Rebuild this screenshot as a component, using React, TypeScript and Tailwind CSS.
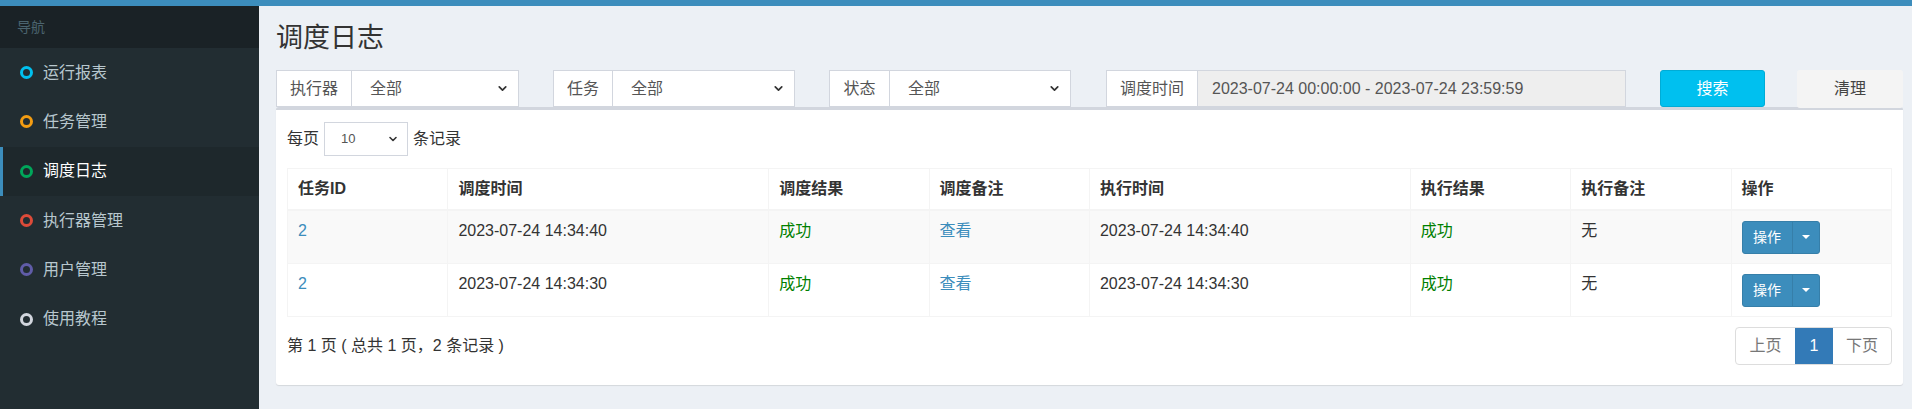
import { ChevronDown } from "lucide-react";

const navItems = [
  { label: "运行报表", ring: "border-[#00c0ef]" },
  { label: "任务管理", ring: "border-[#f39c12]" },
  { label: "调度日志", ring: "border-[#00a65a]", active: true },
  { label: "执行器管理", ring: "border-[#dd4b39]" },
  { label: "用户管理", ring: "border-[#605ca8]" },
  { label: "使用教程", ring: "border-[#d2d6de]" },
];

const cols = [
  { title: "任务ID", w: "w-[10%]" },
  { title: "调度时间", w: "w-[20%]" },
  { title: "调度结果", w: "w-[10%]" },
  { title: "调度备注", w: "w-[10%]" },
  { title: "执行时间", w: "w-[20%]" },
  { title: "执行结果", w: "w-[10%]" },
  { title: "执行备注", w: "w-[10%]" },
  { title: "操作", w: "w-[10%]" },
];

const rows = [
  { id: 2, trigger: "2023-07-24 14:34:40", handle: "2023-07-24 14:34:40" },
  { id: 2, trigger: "2023-07-24 14:34:30", handle: "2023-07-24 14:34:30" },
];

function SelectGroup({ label, width, labelWidth }: { label: string; width: string; labelWidth: string }) {
  return (
    <div className={`${width} h-[37px] flex border border-[#d2d6de] bg-white shrink-0`}>
      <div className={`${labelWidth} flex items-center justify-center border-r border-[#d2d6de] text-[#555]`}>
        {label}
      </div>
      <div className="flex-1 flex items-center justify-between pl-[18px] pr-[9px] text-[#555]">
        <span>全部</span>
        <ChevronDown className="h-[13px] w-[13px] text-[#333]" strokeWidth={3.2} />
      </div>
    </div>
  );
}

function ActionButton() {
  return (
    <div className="inline-flex h-[33px] rounded-[3px] bg-[#3c8dbc] border border-[#367fa9] text-white text-[14px]">
      <span className="w-[49px] flex items-center justify-center">操作</span>
      <span className="w-[27px] flex items-center justify-center border-l border-[#367fa9]">
        <span className="border-x-[4px] border-t-[4px] border-x-transparent border-t-white" />
      </span>
    </div>
  );
}

export default function App() {
  return (
    <div className="w-[1912px] h-[409px] flex flex-col font-['Liberation_Sans','Noto_Sans_CJK_SC',sans-serif] text-[16px] text-[#333] overflow-hidden">
      <div className="h-[6px] bg-[#3c8dbc] shrink-0" />
      <div className="flex flex-1">
        {/* sidebar */}
        <aside className="w-[259px] shrink-0 bg-[#222d32]">
          <div className="h-[42px] bg-[#1a2226] pl-[17px] flex items-center text-[14px] text-[#4b646f]">
            导航
          </div>
          {navItems.map((n) => (
            <div
              key={n.label}
              className={`h-[49.3px] flex items-center pl-[17px] border-l-[3px] ${
                n.active ? "border-l-[#3c8dbc] bg-[#1e282c] text-white" : "border-l-transparent text-[#b8c7ce]"
              }`}
            >
              <span className={`w-[13px] h-[13px] rounded-full border-[3px] ${n.ring}`} />
              <span className="ml-[10px] text-[16px]">{n.label}</span>
            </div>
          ))}
        </aside>

        {/* content */}
        <main className="flex-1 bg-[#ecf0f5] pl-[17px] pr-[9px]">
          <div className="h-[64px] flex items-center">
            <h1 className="text-[27px] leading-none text-[#333]">调度日志</h1>
          </div>

          <div className="flex items-center h-[37px]">
            <SelectGroup label="执行器" width="w-[243px]" labelWidth="w-[75px]" />
            <div className="ml-[34px]">
              <SelectGroup label="任务" width="w-[242px]" labelWidth="w-[59px]" />
            </div>
            <div className="ml-[34px]">
              <SelectGroup label="状态" width="w-[242px]" labelWidth="w-[60px]" />
            </div>
            <div className="ml-[35px] w-[520px] h-[37px] flex border border-[#d2d6de] shrink-0">
              <div className="w-[91px] flex items-center justify-center bg-white border-r border-[#d2d6de] text-[#555]">
                调度时间
              </div>
              <div className="flex-1 flex items-center pl-[14px] bg-[#eeeeee] text-[#555]">
                2023-07-24 00:00:00 - 2023-07-24 23:59:59
              </div>
            </div>
            <button className="ml-[34px] w-[105px] h-[37px] rounded-[3px] bg-[#00c0ef] border border-[#00acd6] text-white">
              搜索
            </button>
            <button className="ml-[32px] w-[106px] h-[38px] rounded-[3px] bg-[#f4f4f4] text-[#444]">
              清理
            </button>
          </div>

          <div className="bg-white border-t-[3px] border-[#d2d6de] rounded-[3px] shadow-[0_1px_1px_rgba(0,0,0,0.1)] px-[11px] pt-[12px] pb-[20px]">
            <div className="flex items-center h-[34px]">
              <span>每页</span>
              <div className="ml-[5px] w-[84px] h-[34px] border border-[#d2d6de] flex items-center justify-between pl-[16px] pr-[8px] text-[13px] text-[#555]">
                <span>10</span>
                <ChevronDown className="h-[12px] w-[12px] text-[#333]" strokeWidth={3.2} />
              </div>
              <span className="ml-[5px]">条记录</span>
            </div>

            <table className="mt-[12px] w-full table-fixed border-collapse border border-[#f4f4f4]">
              <colgroup>
                {cols.map((c) => (
                  <col key={c.title} className={c.w} />
                ))}
              </colgroup>
              <thead>
                <tr className="border-b-2 border-[#f4f4f4]">
                  {cols.map((c) => (
                    <th
                      key={c.title}
                      className="text-left font-bold px-[10px] h-[41px] leading-[22px] border-l border-[#f4f4f4] align-middle"
                    >
                      {c.title}
                    </th>
                  ))}
                </tr>
              </thead>
              <tbody>
                {rows.map((r, i) => (
                  <tr key={i} className={`border-t border-[#f4f4f4] ${i === 0 ? "bg-[#f9f9f9]" : "bg-white"}`}>
                    <td className="px-[10px] pt-[9px] pb-[9px] align-top leading-[22px] border-l border-[#f4f4f4] text-[#3c8dbc]">
                      {r.id}
                    </td>
                    <td className="px-[10px] pt-[9px] align-top leading-[22px] border-l border-[#f4f4f4]">
                      {r.trigger}
                    </td>
                    <td className="px-[10px] pt-[9px] align-top leading-[22px] border-l border-[#f4f4f4] text-[#008000]">
                      成功
                    </td>
                    <td className="px-[10px] pt-[9px] align-top leading-[22px] border-l border-[#f4f4f4] text-[#3c8dbc]">
                      查看
                    </td>
                    <td className="px-[10px] pt-[9px] align-top leading-[22px] border-l border-[#f4f4f4]">
                      {r.handle}
                    </td>
                    <td className="px-[10px] pt-[9px] align-top leading-[22px] border-l border-[#f4f4f4] text-[#008000]">
                      成功
                    </td>
                    <td className="px-[10px] pt-[9px] align-top leading-[22px] border-l border-[#f4f4f4]">
                      无
                    </td>
                    <td className="px-[10px] pt-[10px] pb-[9px] align-top border-l border-[#f4f4f4]">
                      <ActionButton />
                    </td>
                  </tr>
                ))}
              </tbody>
            </table>

            <div className="mt-[10px] flex items-center justify-between h-[38px]">
              <span>第 1 页 ( 总共 1 页，2 条记录 )</span>
              <div className="flex h-[38px] border border-[#dddddd] rounded-[4px] overflow-hidden text-[#777]">
                <span className="w-[59px] flex items-center justify-center">上页</span>
                <span className="w-[38px] flex items-center justify-center bg-[#337ab7] text-white">1</span>
                <span className="w-[58px] flex items-center justify-center">下页</span>
              </div>
            </div>
          </div>
        </main>
      </div>
    </div>
  );
}
